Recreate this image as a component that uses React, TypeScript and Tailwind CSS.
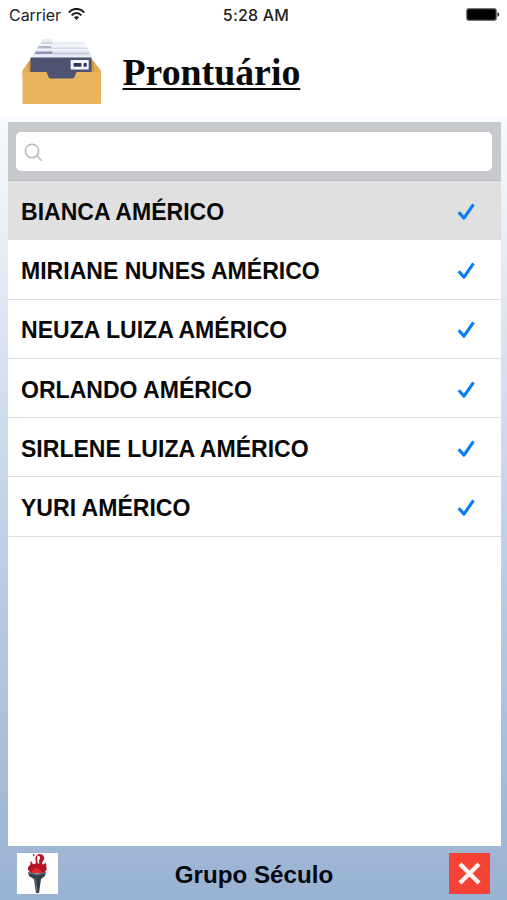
const patients = [
    "BIANCA AMÉRICO",
    "MIRIANE NUNES AMÉRICO",
    "NEUZA LUIZA AMÉRICO",
    "ORLANDO AMÉRICO",
    "SIRLENE LUIZA AMÉRICO",
    "YURI AMÉRICO",
];

const WifiIcon = () => (
    <svg className="ml-[7px] mt-[8px] h-[13px] w-[17px]" viewBox="0 0 17 13" fill="none" stroke="#1c1c1c" strokeWidth="2.1">
        <path d="M0.8 4.6C5 -0.3 12 -0.3 16.2 4.6" />
        <path d="M3.7 7.4C6.3 4.2 10.7 4.2 13.3 7.4" />
        <path d="M8.5 12L5.9 9.2C7.3 7.8 9.7 7.8 11.1 9.2Z" fill="#1c1c1c" stroke="none" />
    </svg>
);

const StatusBar = () => (
    <div className="grid h-[30px] grid-cols-3 font-['Inter',sans-serif] text-[16px] leading-[30px] text-[#222222]">
        <div className="flex pl-[9px]">
            <span className="tracking-[-0.05px]">Carrier</span>
            <WifiIcon />
        </div>
        <div className="pl-[5px] text-center font-medium tracking-[0.2px]">5:28 AM</div>
        <div className="flex justify-end pr-[7px]">
            <svg className="mt-[8px] h-[13px] w-[34px]" viewBox="0 0 34 13">
                <rect x="0.7" y="0.7" width="29.6" height="11.6" rx="2" fill="#000" stroke="#777777" strokeWidth="1.2" />
                <path d="M31.5 4.2C33.6 4.6 33.6 8.4 31.5 8.8Z" fill="#111" />
            </svg>
        </div>
    </div>
);

const FolderIcon = () => (
    <svg className="h-[68px] w-[80px]" viewBox="0 0 80 68">
        <path d="M16 12L19 5Q20 2 23 2H28Q30 2 31 5H63L65 12Z" fill="#e9edf4" />
        <path d="M18 8L20 5H30L31 8Z" fill="#d3d8e3" />
        <path d="M13 17L16 9Q17 7 19 7H64L67 17Z" fill="#f3f5fa" />
        <path d="M15 11.500L17 9H29L30 11.500Z" fill="#b4b7cb" />
        <path d="M30 10.500H65L65.500 12H31Z" fill="#d3d7e4" />
        <path d="M10 22L13 13H67L70 22Z" fill="#e6ebf5" />
        <path d="M12.500 17L14 14.500H30L31 17Z" fill="#8f91b2" />
        <path d="M31 15.500H67L68 17.500H32Z" fill="#c4c8db" />
        <path d="M8.500 22L0.500 34V38H79V34L69 21Z" fill="#d39840" />
        <path d="M6.500 25L0.500 34V38H6.500ZM72 25L79 34V38H72Z" fill="#e3ae58" />
        <path d="M8.500 20.500H69.500V48H8.500Z" fill="#4d5370" />
        <rect x="48.700" y="23" width="18" height="9.500" fill="#f4f6fc" />
        <rect x="51.500" y="26" width="8" height="3.700" rx="0.800" fill="#343a52" />
        <rect x="61.500" y="26" width="3.300" height="3.700" rx="0.800" fill="#343a52" />
        <path d="M0.500 35H24.500L26.500 40Q27 41.500 29 41.500H50Q52 41.500 52.500 40L54.500 35H79V66Q79 67 78 67H1.500Q0.500 67 0.500 66Z" fill="#e8b45d" />
    </svg>
);

const SearchBar = () => (
    <div className="h-[59px] border-b border-[#bcbcc0] bg-[#c8c9cc] px-[8px] pt-[10px]">
        <div className="flex h-[39px] w-[476px] items-center rounded-[5px] bg-white pt-[2px] pl-[8px]">
            <svg className="h-[19px] w-[19px]" viewBox="0 0 19 19" fill="none" stroke="#b9b9bb" strokeWidth="1.500">
                <circle cx="8" cy="8" r="6.700" />
                <path d="M12.700 12.700L17.700 17.700" />
            </svg>
        </div>
    </div>
);

const CheckIcon = () => (
    <svg className="mb-[1px] h-[18px] w-[18px]" viewBox="0 0 18 18" fill="none" stroke="#087df8" strokeWidth="3.100" strokeLinejoin="round">
        <path d="M1.700 9.200L7 15.100L16.500 1.300" />
    </svg>
);

const TorchIcon = () => (
    <svg className="h-[41px] w-[41px] bg-white" viewBox="0 0 41 41">
        <path d="M14 20C9 16 11 14 13 12C14 11 13 9 14 8C16 10 15 12 18 11C21 8 16 6 20 2C22 0 26 1 27 4C28 7 25 8 25 11C28 12 28 10 28 9C29 11 30 12 29 14C31 15 29 18 27 20Z" fill="#b51526" />
        <path d="M20.500 2.500C24 3 23.500 5.500 22 7.500C22 9 22.500 9.500 22 11C19.500 10 21 7.500 20 5.500Z" fill="#fff" />
        <path d="M15 20C14 16 18 17 19 14C21 17 24 15 25 20Z" fill="#e02b31" />
        <path d="M16 1L18 2L16 3.500Z" fill="#a21325" />
        <path d="M11 19Q20 22 29 19L28 23L24 26H17L12 23Z" fill="#35404e" />
        <path d="M17 26H24L22 40H19Z" fill="#303b48" />
        <path d="M12 20Q20 23 28 20M18.500 26L20 39" fill="none" stroke="#697684" />
    </svg>
);

const Footer = () => (
    <div className="flex h-[54px] items-center justify-between pr-[17px] pl-[17px]">
        <TorchIcon />
        <div className="pt-[4px] pl-[1px] text-[24.200px] font-bold text-[#05080e]">Grupo Século</div>
        <div className="flex h-[41px] w-[41px] items-center justify-center bg-[#f44336]">
            <svg className="h-[23px] w-[23px]" viewBox="0 0 23 23" stroke="#fff3f1" strokeWidth="4.300">
                <path d="M2 2L21 21M21 2L2 21" />
            </svg>
        </div>
    </div>
);

const App = () => {
    return (
        <div className="flex h-[900px] w-[507px] flex-col overflow-hidden bg-linear-to-b from-[#f7fafe] from-[13%] via-[#bfd0e6] via-[60%] to-[#9ab2d2] font-['Liberation_Sans',Arial,sans-serif]">
            <div className="h-[116px] shrink-0 bg-white">
                <StatusBar />
                <div className="flex pt-[7px] pl-[22px]">
                    <FolderIcon />
                    <div className="ml-[20.500px] mt-[13px] font-['Liberation_Serif',serif] text-[37.800px] leading-[44px] font-bold text-[#0a0a0a] underline decoration-[2px] underline-offset-[3px] [text-decoration-skip-ink:none]">
                        Prontuário
                    </div>
                </div>
            </div>
            <div className="mt-[6px] mr-[6px] ml-[8px] h-[724px] shrink-0 bg-white">
                <SearchBar />
                {patients.map((name, index) => (
                    <div
                        key={name}
                        className={`flex h-[59.300px] items-center justify-between border-b border-[#dedfe0] pt-[4px] pr-[26.500px] pl-[13px] text-[23.050px] font-bold text-[#080808] ${index === 0 ? "bg-[#e0e0e0]" : ""}`}
                    >
                        {name}
                        <CheckIcon />
                    </div>
                ))}
            </div>
            <Footer />
        </div>
    );
};

export default App;
